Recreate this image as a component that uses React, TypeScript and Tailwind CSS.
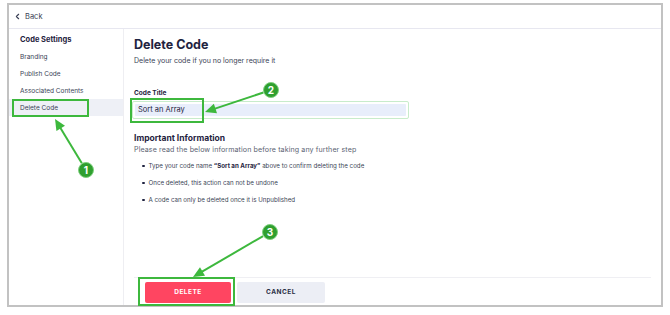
import { ChevronLeft } from 'lucide-react';

const navItems = ['Branding', 'Publish Code', 'Associated Contents', 'Delete Code'];

// arrow from a numbered circle to the thing it points at
function Callout({ n, cx, cy, tx, ty }: { n: number; cx: number; cy: number; tx: number; ty: number }) {
  const dx = tx - cx;
  const dy = ty - cy;
  const len = Math.hypot(dx, dy);
  const ux = dx / len;
  const uy = dy / len;
  const sx = cx + ux * 8;
  const sy = cy + uy * 8;
  const head = 11;
  const bx = tx - ux * head;
  const by = ty - uy * head;
  const px = -uy * 5;
  const py = ux * 5;
  return (
    <g>
      <line x1={sx} y1={sy} x2={bx + ux * 2} y2={by + uy * 2} stroke="#3db83d" strokeWidth={2} />
      <polygon points={`${tx},${ty} ${bx + px},${by + py} ${bx - px},${by - py}`} fill="#3db83d" />
      <circle cx={cx} cy={cy} r={7.5} fill="#2f9f2f" stroke="#7fd17f" strokeWidth={1} />
      <text x={cx} y={cy + 3.5} textAnchor="middle" fontSize={10} fontWeight={700} fill="#fff" fontFamily="Inter, sans-serif">
        {n}
      </text>
    </g>
  );
}

export default function App() {
  return (
    <div className="relative w-[670px] h-[315px] bg-white font-['Inter',sans-serif] text-[#1f2340]">
      <div className="absolute left-[7px] top-[3px] w-[656px] h-[304px] border-2 border-[#c2c2c2] flex flex-col">
        <div className="h-[24px] flex items-center gap-[3px] pl-[4px] border-b border-[#e7e7f0] text-[7.5px] text-[#3a3f55]">
          <ChevronLeft size={9} strokeWidth={3} />
          <span>Back</span>
        </div>
        <div className="flex flex-1">
          <aside className="w-[115px] border-r border-[#eeeef2] pt-[2px]">
            <div className="h-[17px] pt-[4px] leading-[10px] pl-[11px] text-[7.5px] font-bold">Code Settings</div>
            {navItems.map((item) => (
              <div
                key={item}
                className={
                  item === 'Delete Code'
                    ? 'h-[17px] pt-[4px] leading-[10px] pl-[11px] text-[6.5px] text-[#3a3f55] bg-[#eef0f6]'
                    : 'h-[17px] pt-[4px] leading-[10px] pl-[11px] text-[6.5px] text-[#3a3f55]'
                }
              >
                {item}
              </div>
            ))}
          </aside>
          <main className="flex-1 flex flex-col pl-[10px] pr-[10px]">
            <div className="flex-1">
              <h1 className="mt-[8px] text-[12.5px] leading-[16px] font-bold">Delete Code</h1>
              <p className="mt-[3px] text-[7px] leading-[10px] text-[#3a3f55]">Delete your code if you no longer require it</p>
              <div className="mt-[23px] text-[6.5px] leading-[9px] font-bold">Code Title</div>
              <div className="mt-[3px] -ml-[2px] w-[277px] p-[2px] border border-[#c8eccb] rounded-[2px]">
                <div className="h-[12px] bg-[#e8eefb] rounded-[1px] pl-[3px] text-[7.5px] leading-[12px] text-[#1f2340]">
                  Sort an Array
                </div>
              </div>
              <h2 className="mt-[13px] text-[8.5px] leading-[12px] font-bold">Important Information</h2>
              <p className="mt-[1px] text-[7.1px] leading-[10px] tracking-[0.1px] text-[#5a5f72]">
                Please read the below information before taking any further step
              </p>
              <ul className="mt-[6px] pl-[8px] flex flex-col gap-[7px] text-[6.2px] leading-[10px] text-[#3a3f55]">
                <li className="flex items-center gap-[4px]">
                  <span className="w-[2.5px] h-[2.5px] rounded-full bg-[#1f2340]" />
                  <span>
                    Type your code name <b className="text-[#1f2340]">“Sort an Array”</b> above to confirm deleting the code
                  </span>
                </li>
                <li className="flex items-center gap-[4px]">
                  <span className="w-[2.5px] h-[2.5px] rounded-full bg-[#1f2340]" />
                  <span>Once deleted, this action can not be undone</span>
                </li>
                <li className="flex items-center gap-[4px]">
                  <span className="w-[2.5px] h-[2.5px] rounded-full bg-[#1f2340]" />
                  <span>A code can only be deleted once it is Unpublished</span>
                </li>
              </ul>
            </div>
            <div className="h-[28px] border-t border-[#efeff3] flex items-start gap-[6px] pl-[11px] pt-[4px]">
              <button className="w-[86px] h-[21px] rounded-[2px] bg-[#ff4561] text-white text-[6.5px] font-bold tracking-[0.5px]">
                DELETE
              </button>
              <button className="w-[88px] h-[21px] rounded-[2px] bg-[#eceef5] text-[#2b2f45] text-[6.5px] font-bold tracking-[0.5px]">
                CANCEL
              </button>
            </div>
          </main>
        </div>
      </div>

      {/* annotation boxes */}
      <div className="absolute left-[12px] top-[99px] w-[77px] h-[18px] border-2 border-[#3db83d]" />
      <div className="absolute left-[130px] top-[98px] w-[74px] h-[25px] border-2 border-[#3db83d]" />
      <div className="absolute left-[138px] top-[277px] w-[97px] h-[29px] border-2 border-[#3db83d]" />

      <svg className="absolute inset-0" width={670} height={315}>
        <Callout n={1} cx={86} cy={170} tx={55} ty={119} />
        <Callout n={2} cx={271} cy={90} tx={205} ty={112} />
        <Callout n={3} cx={270} cy={232} tx={193} ty={277} />
      </svg>
    </div>
  );
}
